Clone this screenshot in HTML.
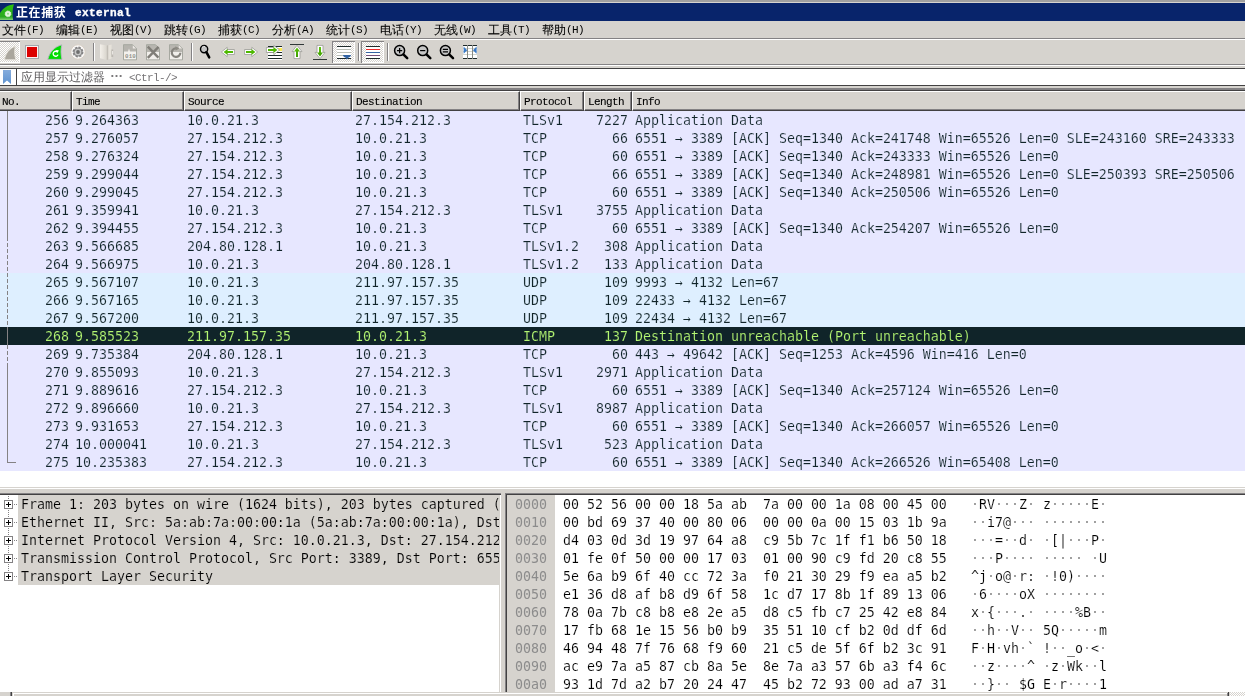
<!DOCTYPE html><html lang="zh"><head><meta charset="utf-8"><title>正在捕获 external</title><style>
html,body{margin:0;padding:0}
body{width:1245px;height:696px;overflow:hidden;background:#d6d3ce;position:relative;font-family:'Liberation Sans',sans-serif}
.a{position:absolute}
.m{font-family:'DejaVu Sans Mono','Liberation Mono',monospace;font-size:13.29px;white-space:pre;line-height:18px}
.ui{font-family:'Liberation Mono','WenQuanYi Zen Hei','Noto Sans CJK SC',monospace;font-size:12px;white-space:pre;line-height:12px;color:#000}
.ui .l{font-size:11px;letter-spacing:-0.6px}
.row span,.ui,.m,.g{will-change:transform}
.hl{background:#848284}.hd{background:#424142}.hw{background:#fff}
.row{position:absolute;left:0;width:1245px;height:18px;color:#102429}
.row span{position:absolute;top:1px;height:18px}
.t{background:#e7e7ff;-webkit-text-stroke:0.15px #e7e7ff}.u{background:#deefff;-webkit-text-stroke:0.15px #deefff}.i{background:#102429;color:#b5f773;-webkit-text-stroke:0.15px #102429}
.hc{position:absolute;top:91px;height:20px;box-sizing:border-box;background:#d6d3ce;border-top:1px solid #fff;border-left:1px solid #fff;border-bottom:1px solid #424142;border-right:1px solid #424142}
.hc:after{content:'';position:absolute;right:0;top:0;bottom:0;width:1px;background:#848284}
.hc:before{content:'';position:absolute;left:0;right:0;bottom:0;height:1px;background:#848284}
.hc b{position:absolute;left:2.5px;top:4px;font-weight:normal;-webkit-text-stroke:0.12px #000}
.chk{background-image:conic-gradient(#fff 25%,#d6d3ce 0 50%,#fff 0 75%,#d6d3ce 0);background-size:2px 2px}
.hx i{font-style:normal;color:#707070}</style></head><body>
<div class="a" style="left:0;top:0;width:1245px;height:2px;background:#a0a0a0"></div>
<div class="a" style="left:0;top:2px;width:1245px;height:1px;background:#d6d3ce"></div>
<div class="a" style="left:0;top:3px;width:1245px;height:18px;background:#08246b"></div>
<svg class="a" style="left:0;top:3px" width="16" height="18" viewBox="0 0 16 18"><defs><linearGradient id="fg" x1="0" y1="0" x2="0" y2="1"><stop offset="0" stop-color="#2cc40c"/><stop offset="0.8" stop-color="#2aa820"/><stop offset="1" stop-color="#86d27a"/></linearGradient></defs><path d="M-1 11.5 C2.5 5.5 7 2.2 13.9 1.2 C12.6 5.5 12.2 11 13.1 17 L-1 17 Z" fill="url(#fg)"/><circle cx="8" cy="10.8" r="2.9" fill="#e4f6de" stroke="#e4f6de" stroke-width="1" stroke-dasharray="1 1"/><circle cx="8" cy="10.8" r="1" fill="#8fd884"/></svg>
<div class="a ui" style="left:16px;top:8px;color:#fff;font-weight:bold;font-family:'Liberation Mono','Noto Sans CJK SC','WenQuanYi Zen Hei',monospace"><span style="letter-spacing:0.6px">正在捕获</span></div>
<div class="a ui" style="left:75px;top:7px;color:#fff;font-weight:bold"><span class="l" style="letter-spacing:0.4px;-webkit-text-stroke:0.35px #fff">external</span></div>
<div class="a ui" style="left:2px;top:25px;-webkit-text-stroke:0.1px #000">文件<span class="l" style="position:relative;top:-1px;-webkit-text-stroke:0">(F)</span></div>
<div class="a ui" style="left:56px;top:25px;-webkit-text-stroke:0.1px #000">编辑<span class="l" style="position:relative;top:-1px;-webkit-text-stroke:0">(E)</span></div>
<div class="a ui" style="left:110px;top:25px;-webkit-text-stroke:0.1px #000">视图<span class="l" style="position:relative;top:-1px;-webkit-text-stroke:0">(V)</span></div>
<div class="a ui" style="left:164px;top:25px;-webkit-text-stroke:0.1px #000">跳转<span class="l" style="position:relative;top:-1px;-webkit-text-stroke:0">(G)</span></div>
<div class="a ui" style="left:218px;top:25px;-webkit-text-stroke:0.1px #000">捕获<span class="l" style="position:relative;top:-1px;-webkit-text-stroke:0">(C)</span></div>
<div class="a ui" style="left:272px;top:25px;-webkit-text-stroke:0.1px #000">分析<span class="l" style="position:relative;top:-1px;-webkit-text-stroke:0">(A)</span></div>
<div class="a ui" style="left:326px;top:25px;-webkit-text-stroke:0.1px #000">统计<span class="l" style="position:relative;top:-1px;-webkit-text-stroke:0">(S)</span></div>
<div class="a ui" style="left:380px;top:25px;-webkit-text-stroke:0.1px #000">电话<span class="l" style="position:relative;top:-1px;-webkit-text-stroke:0">(Y)</span></div>
<div class="a ui" style="left:434px;top:25px;-webkit-text-stroke:0.1px #000">无线<span class="l" style="position:relative;top:-1px;-webkit-text-stroke:0">(W)</span></div>
<div class="a ui" style="left:488px;top:25px;-webkit-text-stroke:0.1px #000">工具<span class="l" style="position:relative;top:-1px;-webkit-text-stroke:0">(T)</span></div>
<div class="a ui" style="left:542px;top:25px;-webkit-text-stroke:0.1px #000">帮助<span class="l" style="position:relative;top:-1px;-webkit-text-stroke:0">(H)</span></div>
<div class="a hl" style="left:0;top:38px;width:1245px;height:1px"></div>
<div class="a hw" style="left:0;top:39px;width:1245px;height:1px"></div>
<div class="a hl" style="left:0;top:64px;width:1245px;height:1px"></div>
<div class="a hw" style="left:0;top:65px;width:1245px;height:1px"></div>
<svg class="a" style="left:0;top:40px" width="490" height="24" viewBox="0 0 490 24">
<defs>
<pattern id="ck" width="2" height="2" patternUnits="userSpaceOnUse"><rect width="2" height="2" fill="#d6d3ce"/><rect width="1" height="1" fill="#fff"/><rect x="1" y="1" width="1" height="1" fill="#fff"/></pattern>
<linearGradient id="gup" x1="0" y1="0" x2="0" y2="1"><stop offset="0" stop-color="#5ec40c"/><stop offset="1" stop-color="#3c9a00"/></linearGradient>
</defs>
<!-- 1 start capture (disabled, checked) -->
<g shape-rendering="crispEdges">
<rect x="0" y="2" width="19" height="20" fill="url(#ck)"/>
<rect x="0" y="1" width="20" height="1" fill="#848284"/>
<rect x="19" y="2" width="1" height="21" fill="#fff"/>
<rect x="0" y="22" width="20" height="1" fill="#fff"/>
</g>
<path d="M4.4 19.8 C5.6 13.2 9.4 8.4 15.3 6.3 C14.3 10.8 14.5 15.5 15.9 19.8 Z" fill="#aaa69d" stroke="#e9e5dd" stroke-width="0.9"/>
<!-- 2 stop -->
<rect x="25.5" y="5.5" width="13" height="13" fill="#fff0f0" stroke="#a4a8ac" stroke-width="1"/>
<rect x="27" y="7" width="10" height="10" fill="#dc0000"/>
<!-- 3 restart -->
<path d="M47.8 19.4 C49.5 12.5 54 7 61.8 4.8 C60.6 9.5 60.8 14.5 62 19.4 Z" fill="#00dc00" stroke="#b8b4c4" stroke-width="0.9"/>
<path d="M57.6 12.2 A2.5 2.5 0 1 0 58 14.6" fill="none" stroke="#fff" stroke-width="1.3"/>
<path d="M55.6 10 L58.8 10.2 L57.6 13 Z" fill="#fff"/>
<!-- 4 options -->
<circle cx="78" cy="12" r="7.2" fill="#fbfaf8" stroke="#d8cec4" stroke-width="0.9"/>
<circle cx="78" cy="12" r="4.6" fill="#c8c8c8" stroke="#848284" stroke-width="1.7" stroke-dasharray="2.2 1.4"/>
<circle cx="78" cy="12" r="4" fill="none" stroke="#8a8a8a" stroke-width="1"/>
<circle cx="78" cy="12" r="1.9" fill="#6e6e6e"/>
<!-- sep -->
<g shape-rendering="crispEdges"><rect x="93" y="3" width="1" height="18" fill="#848284"/><rect x="94" y="3" width="1" height="18" fill="#fff"/></g>
<!-- 5 open (disabled) -->
<defs><linearGradient id="fo" x1="0" y1="0" x2="1" y2="0"><stop offset="0" stop-color="#f3f0ea"/><stop offset="1" stop-color="#d9d5cd"/></linearGradient></defs>
<path d="M100 4.2 L106.8 5.6 L106.8 20 L100 18.2 Z" fill="url(#fo)"/>
<path d="M106.8 5.6 L108.4 5.2 L108.4 19.6 L106.8 20 Z" fill="#c2beb6"/>
<path d="M108.4 5.2 L111.6 4.4 L111.6 18.4 L108.4 19.6 Z" fill="#e6e2da"/>
<rect x="111.4" y="9.5" width="1.8" height="7.5" fill="#bcb8b2"/>
<rect x="112.2" y="11" width="0.9" height="3.5" fill="#f4f2ee"/>
<!-- 6 save (disabled) -->
<path d="M123.5 4.7 H132.5 L136.5 8.7 V19.8 H123.5 Z" fill="#b6b4ae" stroke="#a6a8a0" stroke-width="1"/>
<path d="M124 11.5 L128 11.5 L129 8.5 L130 11.5 L136 11.5 V19.3 H124 Z" fill="#f3f1ed"/>
<path d="M132.8 5.2 L136 8.4 L132.8 8.4 Z" fill="#eeeae6"/>
<text x="125" y="17.6" font-family="Liberation Mono,monospace" font-size="5.8" font-weight="bold" fill="#94948e" letter-spacing="0.2">010</text>
<!-- 7 close (disabled) -->
<path d="M146.5 4.7 H155.5 L159.5 8.7 V19.8 H146.5 Z" fill="#b8b6b0" stroke="#a6a8a0" stroke-width="1"/>
<path d="M147 12 H159 V19.3 H147 Z" fill="#f1efeb"/>
<path d="M147.8 6.6 L158.4 17.6 M158.6 6.8 L147.8 17.8" stroke="#807e78" stroke-width="2.4" fill="none"/>
<!-- 8 reload (disabled) -->
<path d="M169.5 4.7 H178.5 L182.5 8.7 V19.8 H169.5 Z" fill="#b8b6b0" stroke="#a6a8a0" stroke-width="1"/>
<path d="M170 12 H182 V19.3 H170 Z" fill="#f1efeb"/>
<path d="M178.8 5.2 L182 8.4 L178.8 8.4 Z" fill="#eeeae6"/>
<path d="M180.4 12.8 A4.3 4.3 0 1 1 177.2 8.4" fill="none" stroke="#86847e" stroke-width="2.2"/>
<path d="M175.4 6.2 L179.4 8.4 L175.6 10.6 Z" fill="#8e8c84"/>
<!-- sep -->
<g shape-rendering="crispEdges"><rect x="191" y="3" width="1" height="18" fill="#848284"/><rect x="192" y="3" width="1" height="18" fill="#fff"/></g>
<!-- find -->
<circle cx="204.1" cy="9.1" r="3.6" fill="#c4c4c4" stroke="#000" stroke-width="1.4"/>
<path d="M202 7.4 A2.6 2.6 0 0 1 205 6.6" fill="none" stroke="#eee" stroke-width="0.9"/>
<path d="M206.4 12.2 L209.2 17.4" stroke="#000" stroke-width="2.5" stroke-linecap="round"/>
<!-- back -->
<path d="M221.4 12 L227.2 7.3 V9.5 H234.4 V14.5 H227.2 V16.7 Z" fill="#fff" stroke="#9a9a96" stroke-width="0.8" stroke-linejoin="round"/>
<path d="M223.6 12 L227.6 8.9 V11 H233 V13 H227.6 V15.1 Z" fill="#4eb800"/>
<!-- forward -->
<path d="M257.6 12 L251.8 7.3 V9.5 H244.6 V14.5 H251.8 V16.7 Z" fill="#fff" stroke="#9a9a96" stroke-width="0.8" stroke-linejoin="round"/>
<path d="M255.4 12 L251.4 8.9 V11 H246 V13 H251.4 V15.1 Z" fill="#4eb800"/>
<!-- goto -->
<g shape-rendering="crispEdges">
<rect x="268" y="6" width="14" height="14" fill="#fff"/>
<rect x="268" y="6" width="14" height="1" fill="#1e2a2a"/>
<rect x="268" y="12" width="14" height="1" fill="#1e2a2a"/>
<rect x="268" y="15" width="14" height="1" fill="#1e2a2a"/>
<rect x="268" y="18" width="14" height="1" fill="#1e2a2a"/>
<rect x="278" y="8" width="4" height="3" fill="#fce94f"/>
</g>
<path d="M279.6 10 L273.8 5.3 V7.5 H266.4 V12.5 H273.8 V14.7 Z" fill="#fff" stroke="#9a9a96" stroke-width="0.8" stroke-linejoin="round"/>
<path d="M277.4 10 L273.4 6.9 V9 H268 V11 H273.4 V13.1 Z" fill="#4eb800"/>
<!-- top -->
<rect x="290" y="4" width="14" height="1" fill="#303838" shape-rendering="crispEdges"/>
<path d="M297 5.4 L302 11.6 H300 V18.6 H294 V11.6 H292 Z" fill="#fff" stroke="#9a9a96" stroke-width="0.8" stroke-linejoin="round"/>
<path d="M297 7.6 L300 11.6 H298 V17 H296 V11.6 H294 Z" fill="url(#gup)"/>
<!-- bottom -->
<rect x="313" y="19" width="14" height="1" fill="#303838" shape-rendering="crispEdges"/>
<path d="M320 18.6 L325 12.4 H323 V5.4 H317 V12.4 H315 Z" fill="#fff" stroke="#9a9a96" stroke-width="0.8" stroke-linejoin="round"/>
<path d="M320 16.4 L323 12.4 H321 V7 H319 V12.4 H317 Z" fill="url(#gup)"/>
<!-- autoscroll (checked) -->
<g shape-rendering="crispEdges">
<rect x="333" y="2" width="21" height="20" fill="url(#ck)"/>
<rect x="332" y="1" width="23" height="1" fill="#848284"/>
<rect x="332" y="1" width="1" height="22" fill="#848284"/>
<rect x="354" y="2" width="1" height="21" fill="#fff"/>
<rect x="333" y="22" width="22" height="1" fill="#fff"/>
<rect x="337" y="6" width="14" height="13" fill="#fff"/>
<rect x="337" y="6" width="14" height="1" fill="#1e2a2a"/>
<rect x="337" y="9" width="14" height="1" fill="#b8bcb4"/>
<rect x="337" y="12" width="14" height="1" fill="#b8bcb4"/>
<rect x="337" y="15" width="14" height="1" fill="#b8bcb4"/>
<rect x="337" y="18" width="14" height="1" fill="#1e2a2a"/>
</g>
<path d="M343 15 H351 C351 16.5 349.5 17.2 348.6 17.6 L347 19.6 L345.4 17.6 C344.5 17.2 343 16.5 343 15 Z" fill="#3465a4"/>
<!-- sep -->
<g shape-rendering="crispEdges"><rect x="358" y="3" width="1" height="18" fill="#848284"/><rect x="359" y="3" width="1" height="18" fill="#fff"/></g>
<!-- colorize (checked) -->
<g shape-rendering="crispEdges">
<rect x="362" y="2" width="21" height="20" fill="url(#ck)"/>
<rect x="361" y="1" width="23" height="1" fill="#848284"/>
<rect x="361" y="1" width="1" height="22" fill="#848284"/>
<rect x="383" y="2" width="1" height="21" fill="#fff"/>
<rect x="362" y="22" width="22" height="1" fill="#fff"/>
<rect x="366" y="6" width="14" height="13" fill="#fff"/>
<rect x="366" y="6" width="14" height="1" fill="#1e2a2a"/>
<rect x="366" y="9" width="14" height="1" fill="#ef2929"/>
<rect x="366" y="12" width="14" height="1" fill="#3465a4"/>
<rect x="366" y="15" width="14" height="1" fill="#75507b"/>
<rect x="366" y="18" width="14" height="1" fill="#1e2a2a"/>
</g>
<!-- sep -->
<g shape-rendering="crispEdges"><rect x="387" y="3" width="1" height="18" fill="#848284"/><rect x="388" y="3" width="1" height="18" fill="#fff"/></g>
<!-- zoom in -->
<g id="zm"><circle cx="399.6" cy="10.6" r="5" fill="#c6c6c6" stroke="#000" stroke-width="1.5"/><path d="M403.6 14.6 L407.2 18.2" stroke="#000" stroke-width="2.5" stroke-linecap="round"/></g>
<path d="M397 10.6 H402.2 M399.6 8 V13.2" stroke="#000" stroke-width="1.2"/>
<!-- zoom out -->
<g><circle cx="422.7" cy="10.6" r="5" fill="#c6c6c6" stroke="#000" stroke-width="1.5"/><path d="M426.7 14.6 L430.3 18.2" stroke="#000" stroke-width="2.5" stroke-linecap="round"/></g>
<path d="M420.1 10.6 H425.3" stroke="#000" stroke-width="1.2"/>
<!-- zoom reset -->
<g><circle cx="445.4" cy="10.6" r="5" fill="#c6c6c6" stroke="#000" stroke-width="1.5"/><path d="M449.4 14.6 L453 18.2" stroke="#000" stroke-width="2.5" stroke-linecap="round"/></g>
<path d="M442.8 9.4 H448 M442.8 11.8 H448" stroke="#000" stroke-width="1.2"/>
<!-- resize columns -->
<g shape-rendering="crispEdges">
<rect x="463" y="5" width="14" height="14" fill="#fff"/>
<rect x="463" y="8" width="14" height="1" fill="#d3d7cf"/>
<rect x="463" y="11" width="14" height="1" fill="#d3d7cf"/>
<rect x="463" y="14" width="14" height="1" fill="#d3d7cf"/>
<rect x="467" y="5" width="1" height="14" fill="#888a85"/>
<rect x="472" y="5" width="1" height="14" fill="#888a85"/>
<rect x="463" y="5" width="4" height="1" fill="#1e2a2a"/><rect x="468" y="5" width="4" height="1" fill="#1e2a2a"/><rect x="473" y="5" width="4" height="1" fill="#1e2a2a"/>
<rect x="463" y="18" width="4" height="1" fill="#1e2a2a"/><rect x="468" y="18" width="4" height="1" fill="#1e2a2a"/><rect x="473" y="18" width="4" height="1" fill="#1e2a2a"/>
</g>
<path d="M463.6 6.6 L467.2 10.2 L463.6 13.8 Z" fill="#3a7ac8"/>
<path d="M476.6 6.6 L473 10.2 L476.6 13.8 Z" fill="#3a7ac8"/>
</svg>

<div class="a" style="left:-2px;top:68px;width:1251px;height:18px;box-sizing:border-box;background:#fff;border:1px solid #424142"></div>
<div class="a hd" style="left:16px;top:68px;width:1px;height:18px"></div>
<svg class="a" style="left:3px;top:70px" width="8" height="14" viewBox="0 0 8 14"><defs><linearGradient id="bk" x1="0" y1="0" x2="0" y2="1"><stop offset="0" stop-color="#85acdc"/><stop offset="1" stop-color="#5f93d0"/></linearGradient></defs><path d="M0 0H8V14L4 10.5L0 14Z" fill="url(#bk)"/></svg>
<div class="a ui" style="left:21px;top:72px;color:#5e5c5e">应用显示过滤器</div>
<div class="a g" style="left:110px;top:65px;width:12px;text-align:center;color:#7a787a;font:bold 13px/16px 'Liberation Sans',sans-serif">…</div>
<div class="a ui" style="left:129px;top:72px;color:#767476"><span class="l">&lt;Ctrl-/&gt;</span></div>
<div class="a hl" style="left:0;top:88px;width:1245px;height:2px"></div>
<div class="a hd" style="left:0;top:90px;width:1245px;height:1px"></div>
<div class="hc" style="left:-2px;width:74px"><b class="ui"><span class="l">No.</span></b></div>
<div class="hc" style="left:72px;width:112px"><b class="ui"><span class="l">Time</span></b></div>
<div class="hc" style="left:184px;width:168px"><b class="ui"><span class="l">Source</span></b></div>
<div class="hc" style="left:352px;width:168px"><b class="ui"><span class="l">Destination</span></b></div>
<div class="hc" style="left:520px;width:64px"><b class="ui"><span class="l">Protocol</span></b></div>
<div class="hc" style="left:584px;width:48px"><b class="ui"><span class="l">Length</span></b></div>
<div class="hc" style="left:632px;width:620px"><b class="ui"><span class="l">Info</span></b></div>
<div class="row m t" style="top:111px"><span style="left:0;width:69px;text-align:right">256</span><span style="left:75px">9.264363</span><span style="left:187px">10.0.21.3</span><span style="left:355px">27.154.212.3</span><span style="left:523px">TLSv1</span><span style="left:584px;width:44px;text-align:right">7227</span><span style="left:635px">Application Data</span></div>
<div class="row m t" style="top:129px"><span style="left:0;width:69px;text-align:right">257</span><span style="left:75px">9.276057</span><span style="left:187px">27.154.212.3</span><span style="left:355px">10.0.21.3</span><span style="left:523px">TCP</span><span style="left:584px;width:44px;text-align:right">66</span><span style="left:635px">6551 → 3389 [ACK] Seq=1340 Ack=241748 Win=65526 Len=0 SLE=243160 SRE=243333</span></div>
<div class="row m t" style="top:147px"><span style="left:0;width:69px;text-align:right">258</span><span style="left:75px">9.276324</span><span style="left:187px">27.154.212.3</span><span style="left:355px">10.0.21.3</span><span style="left:523px">TCP</span><span style="left:584px;width:44px;text-align:right">60</span><span style="left:635px">6551 → 3389 [ACK] Seq=1340 Ack=243333 Win=65526 Len=0</span></div>
<div class="row m t" style="top:165px"><span style="left:0;width:69px;text-align:right">259</span><span style="left:75px">9.299044</span><span style="left:187px">27.154.212.3</span><span style="left:355px">10.0.21.3</span><span style="left:523px">TCP</span><span style="left:584px;width:44px;text-align:right">66</span><span style="left:635px">6551 → 3389 [ACK] Seq=1340 Ack=248981 Win=65526 Len=0 SLE=250393 SRE=250506</span></div>
<div class="row m t" style="top:183px"><span style="left:0;width:69px;text-align:right">260</span><span style="left:75px">9.299045</span><span style="left:187px">27.154.212.3</span><span style="left:355px">10.0.21.3</span><span style="left:523px">TCP</span><span style="left:584px;width:44px;text-align:right">60</span><span style="left:635px">6551 → 3389 [ACK] Seq=1340 Ack=250506 Win=65526 Len=0</span></div>
<div class="row m t" style="top:201px"><span style="left:0;width:69px;text-align:right">261</span><span style="left:75px">9.359941</span><span style="left:187px">10.0.21.3</span><span style="left:355px">27.154.212.3</span><span style="left:523px">TLSv1</span><span style="left:584px;width:44px;text-align:right">3755</span><span style="left:635px">Application Data</span></div>
<div class="row m t" style="top:219px"><span style="left:0;width:69px;text-align:right">262</span><span style="left:75px">9.394455</span><span style="left:187px">27.154.212.3</span><span style="left:355px">10.0.21.3</span><span style="left:523px">TCP</span><span style="left:584px;width:44px;text-align:right">60</span><span style="left:635px">6551 → 3389 [ACK] Seq=1340 Ack=254207 Win=65526 Len=0</span></div>
<div class="row m t" style="top:237px"><span style="left:0;width:69px;text-align:right">263</span><span style="left:75px">9.566685</span><span style="left:187px">204.80.128.1</span><span style="left:355px">10.0.21.3</span><span style="left:523px">TLSv1.2</span><span style="left:584px;width:44px;text-align:right">308</span><span style="left:635px">Application Data</span></div>
<div class="row m t" style="top:255px"><span style="left:0;width:69px;text-align:right">264</span><span style="left:75px">9.566975</span><span style="left:187px">10.0.21.3</span><span style="left:355px">204.80.128.1</span><span style="left:523px">TLSv1.2</span><span style="left:584px;width:44px;text-align:right">133</span><span style="left:635px">Application Data</span></div>
<div class="row m u" style="top:273px"><span style="left:0;width:69px;text-align:right">265</span><span style="left:75px">9.567107</span><span style="left:187px">10.0.21.3</span><span style="left:355px">211.97.157.35</span><span style="left:523px">UDP</span><span style="left:584px;width:44px;text-align:right">109</span><span style="left:635px">9993 → 4132 Len=67</span></div>
<div class="row m u" style="top:291px"><span style="left:0;width:69px;text-align:right">266</span><span style="left:75px">9.567165</span><span style="left:187px">10.0.21.3</span><span style="left:355px">211.97.157.35</span><span style="left:523px">UDP</span><span style="left:584px;width:44px;text-align:right">109</span><span style="left:635px">22433 → 4132 Len=67</span></div>
<div class="row m u" style="top:309px"><span style="left:0;width:69px;text-align:right">267</span><span style="left:75px">9.567200</span><span style="left:187px">10.0.21.3</span><span style="left:355px">211.97.157.35</span><span style="left:523px">UDP</span><span style="left:584px;width:44px;text-align:right">109</span><span style="left:635px">22434 → 4132 Len=67</span></div>
<div class="row m i" style="top:327px"><span style="left:0;width:69px;text-align:right">268</span><span style="left:75px">9.585523</span><span style="left:187px">211.97.157.35</span><span style="left:355px">10.0.21.3</span><span style="left:523px">ICMP</span><span style="left:584px;width:44px;text-align:right">137</span><span style="left:635px">Destination unreachable (Port unreachable)</span></div>
<div class="row m t" style="top:345px"><span style="left:0;width:69px;text-align:right">269</span><span style="left:75px">9.735384</span><span style="left:187px">204.80.128.1</span><span style="left:355px">10.0.21.3</span><span style="left:523px">TCP</span><span style="left:584px;width:44px;text-align:right">60</span><span style="left:635px">443 → 49642 [ACK] Seq=1253 Ack=4596 Win=416 Len=0</span></div>
<div class="row m t" style="top:363px"><span style="left:0;width:69px;text-align:right">270</span><span style="left:75px">9.855093</span><span style="left:187px">10.0.21.3</span><span style="left:355px">27.154.212.3</span><span style="left:523px">TLSv1</span><span style="left:584px;width:44px;text-align:right">2971</span><span style="left:635px">Application Data</span></div>
<div class="row m t" style="top:381px"><span style="left:0;width:69px;text-align:right">271</span><span style="left:75px">9.889616</span><span style="left:187px">27.154.212.3</span><span style="left:355px">10.0.21.3</span><span style="left:523px">TCP</span><span style="left:584px;width:44px;text-align:right">60</span><span style="left:635px">6551 → 3389 [ACK] Seq=1340 Ack=257124 Win=65526 Len=0</span></div>
<div class="row m t" style="top:399px"><span style="left:0;width:69px;text-align:right">272</span><span style="left:75px">9.896660</span><span style="left:187px">10.0.21.3</span><span style="left:355px">27.154.212.3</span><span style="left:523px">TLSv1</span><span style="left:584px;width:44px;text-align:right">8987</span><span style="left:635px">Application Data</span></div>
<div class="row m t" style="top:417px"><span style="left:0;width:69px;text-align:right">273</span><span style="left:75px">9.931653</span><span style="left:187px">27.154.212.3</span><span style="left:355px">10.0.21.3</span><span style="left:523px">TCP</span><span style="left:584px;width:44px;text-align:right">60</span><span style="left:635px">6551 → 3389 [ACK] Seq=1340 Ack=266057 Win=65526 Len=0</span></div>
<div class="row m t" style="top:435px"><span style="left:0;width:69px;text-align:right">274</span><span style="left:75px">10.000041</span><span style="left:187px">10.0.21.3</span><span style="left:355px">27.154.212.3</span><span style="left:523px">TLSv1</span><span style="left:584px;width:44px;text-align:right">523</span><span style="left:635px">Application Data</span></div>
<div class="row m t" style="top:453px"><span style="left:0;width:69px;text-align:right">275</span><span style="left:75px">10.235383</span><span style="left:187px">27.154.212.3</span><span style="left:355px">10.0.21.3</span><span style="left:523px">TCP</span><span style="left:584px;width:44px;text-align:right">60</span><span style="left:635px">6551 → 3389 [ACK] Seq=1340 Ack=266526 Win=65408 Len=0</span></div>
<div class="a hl" style="left:7px;top:111px;width:1px;height:126px"></div>
<div class="a" style="left:7px;top:237px;width:1px;height:90px;background-image:linear-gradient(#848284 66.67%,transparent 0);background-size:1px 6px"></div>
<div class="a hl" style="left:7px;top:327px;width:1px;height:18px"></div>
<div class="a" style="left:7px;top:345px;width:1px;height:18px;background-image:linear-gradient(#848284 66.67%,transparent 0);background-size:1px 6px"></div>
<div class="a hl" style="left:7px;top:363px;width:1px;height:100px"></div>
<div class="a hl" style="left:7px;top:462px;width:9px;height:1px"></div>
<div class="a hw" style="left:0;top:471px;width:1245px;height:16px"></div>
<div class="a" style="left:0;top:487px;width:1245px;height:1px;background:#d6d3ce"></div>
<div class="a hw" style="left:0;top:488px;width:1245px;height:1px"></div>
<div class="a hl" style="left:0;top:493px;width:1245px;height:1px"></div>
<div class="a hd" style="left:0;top:494px;width:1245px;height:1px"></div>
<div class="a hw" style="left:0;top:495px;width:499px;height:197px;overflow:hidden">
<div class="a" style="left:18px;top:0;width:481px;height:90px;background:#d6d3ce"></div>
<div class="a" style="left:8px;top:1px;width:1px;height:81px;background-image:linear-gradient(#848284 50%,transparent 0);background-size:1px 2px;z-index:0"></div>
<div class="a m" style="left:21px;top:1px;color:#000;-webkit-text-stroke:0.15px #d6d3ce">Frame 1: 203 bytes on wire (1624 bits), 203 bytes captured (1624 bits) on interface 0</div>
<div class="a" style="left:4px;top:5px;width:9px;height:9px;box-sizing:border-box;border:1px solid #848284;background:#fff"></div>
<div class="a" style="left:6px;top:9px;width:5px;height:1px;background:#000"></div>
<div class="a" style="left:8px;top:7px;width:1px;height:5px;background:#000"></div>
<div class="a" style="left:14px;top:9px;width:1px;height:1px;background:#848284"></div>
<div class="a" style="left:16px;top:9px;width:1px;height:1px;background:#848284"></div>
<div class="a m" style="left:21px;top:19px;color:#000;-webkit-text-stroke:0.15px #d6d3ce">Ethernet II, Src: 5a:ab:7a:00:00:1a (5a:ab:7a:00:00:1a), Dst: 00:52:56:00:00:18 (00:52:56:00:00:18)</div>
<div class="a" style="left:4px;top:23px;width:9px;height:9px;box-sizing:border-box;border:1px solid #848284;background:#fff"></div>
<div class="a" style="left:6px;top:27px;width:5px;height:1px;background:#000"></div>
<div class="a" style="left:8px;top:25px;width:1px;height:5px;background:#000"></div>
<div class="a" style="left:14px;top:27px;width:1px;height:1px;background:#848284"></div>
<div class="a" style="left:16px;top:27px;width:1px;height:1px;background:#848284"></div>
<div class="a m" style="left:21px;top:37px;color:#000;-webkit-text-stroke:0.15px #d6d3ce">Internet Protocol Version 4, Src: 10.0.21.3, Dst: 27.154.212.3</div>
<div class="a" style="left:4px;top:41px;width:9px;height:9px;box-sizing:border-box;border:1px solid #848284;background:#fff"></div>
<div class="a" style="left:6px;top:45px;width:5px;height:1px;background:#000"></div>
<div class="a" style="left:8px;top:43px;width:1px;height:5px;background:#000"></div>
<div class="a" style="left:14px;top:45px;width:1px;height:1px;background:#848284"></div>
<div class="a" style="left:16px;top:45px;width:1px;height:1px;background:#848284"></div>
<div class="a m" style="left:21px;top:55px;color:#000;-webkit-text-stroke:0.15px #d6d3ce">Transmission Control Protocol, Src Port: 3389, Dst Port: 6551, Seq: 1, Ack: 1, Len: 149</div>
<div class="a" style="left:4px;top:59px;width:9px;height:9px;box-sizing:border-box;border:1px solid #848284;background:#fff"></div>
<div class="a" style="left:6px;top:63px;width:5px;height:1px;background:#000"></div>
<div class="a" style="left:8px;top:61px;width:1px;height:5px;background:#000"></div>
<div class="a" style="left:14px;top:63px;width:1px;height:1px;background:#848284"></div>
<div class="a" style="left:16px;top:63px;width:1px;height:1px;background:#848284"></div>
<div class="a m" style="left:21px;top:73px;color:#000;-webkit-text-stroke:0.15px #d6d3ce">Transport Layer Security</div>
<div class="a" style="left:4px;top:77px;width:9px;height:9px;box-sizing:border-box;border:1px solid #848284;background:#fff"></div>
<div class="a" style="left:6px;top:81px;width:5px;height:1px;background:#000"></div>
<div class="a" style="left:8px;top:79px;width:1px;height:5px;background:#000"></div>
<div class="a" style="left:14px;top:81px;width:1px;height:1px;background:#848284"></div>
<div class="a" style="left:16px;top:81px;width:1px;height:1px;background:#848284"></div>
</div>
<div class="a" style="left:499px;top:495px;width:1px;height:197px;background:#d6d3ce"></div>
<div class="a hw" style="left:500px;top:495px;width:1px;height:197px"></div>
<div class="a hl" style="left:505px;top:493px;width:1px;height:199px"></div>
<div class="a hd" style="left:506px;top:494px;width:1px;height:198px"></div>
<div class="a" style="left:501px;top:489px;width:4px;height:203px;background:#d6d3ce"></div>
<div class="a hw" style="left:507px;top:495px;width:738px;height:197px;overflow:hidden">
<div class="a" style="left:0;top:0;width:48px;height:197px;background:#d6d3ce"></div>
<div class="a m" style="left:8px;top:1px;color:#8c8c8c">0000</div>
<div class="a m" style="left:56px;top:1px;color:#000;-webkit-text-stroke:0.15px #fff">00 52 56 00 00 18 5a ab  7a 00 00 1a 08 00 45 00</div>
<div class="a m hx" style="left:464px;top:1px;color:#000;-webkit-text-stroke:0.15px #fff"><i>·</i>RV<i>·</i><i>·</i><i>·</i>Z<i>·</i> z<i>·</i><i>·</i><i>·</i><i>·</i><i>·</i>E<i>·</i></div>
<div class="a m" style="left:8px;top:19px;color:#8c8c8c">0010</div>
<div class="a m" style="left:56px;top:19px;color:#000;-webkit-text-stroke:0.15px #fff">00 bd 69 37 40 00 80 06  00 00 0a 00 15 03 1b 9a</div>
<div class="a m hx" style="left:464px;top:19px;color:#000;-webkit-text-stroke:0.15px #fff"><i>·</i><i>·</i>i7@<i>·</i><i>·</i><i>·</i> <i>·</i><i>·</i><i>·</i><i>·</i><i>·</i><i>·</i><i>·</i><i>·</i></div>
<div class="a m" style="left:8px;top:37px;color:#8c8c8c">0020</div>
<div class="a m" style="left:56px;top:37px;color:#000;-webkit-text-stroke:0.15px #fff">d4 03 0d 3d 19 97 64 a8  c9 5b 7c 1f f1 b6 50 18</div>
<div class="a m hx" style="left:464px;top:37px;color:#000;-webkit-text-stroke:0.15px #fff"><i>·</i><i>·</i><i>·</i>=<i>·</i><i>·</i>d<i>·</i> <i>·</i>[|<i>·</i><i>·</i><i>·</i>P<i>·</i></div>
<div class="a m" style="left:8px;top:55px;color:#8c8c8c">0030</div>
<div class="a m" style="left:56px;top:55px;color:#000;-webkit-text-stroke:0.15px #fff">01 fe 0f 50 00 00 17 03  01 00 90 c9 fd 20 c8 55</div>
<div class="a m hx" style="left:464px;top:55px;color:#000;-webkit-text-stroke:0.15px #fff"><i>·</i><i>·</i><i>·</i>P<i>·</i><i>·</i><i>·</i><i>·</i> <i>·</i><i>·</i><i>·</i><i>·</i><i>·</i> <i>·</i>U</div>
<div class="a m" style="left:8px;top:73px;color:#8c8c8c">0040</div>
<div class="a m" style="left:56px;top:73px;color:#000;-webkit-text-stroke:0.15px #fff">5e 6a b9 6f 40 cc 72 3a  f0 21 30 29 f9 ea a5 b2</div>
<div class="a m hx" style="left:464px;top:73px;color:#000;-webkit-text-stroke:0.15px #fff">^j<i>·</i>o@<i>·</i>r: <i>·</i>!0)<i>·</i><i>·</i><i>·</i><i>·</i></div>
<div class="a m" style="left:8px;top:91px;color:#8c8c8c">0050</div>
<div class="a m" style="left:56px;top:91px;color:#000;-webkit-text-stroke:0.15px #fff">e1 36 d8 af b8 d9 6f 58  1c d7 17 8b 1f 89 13 06</div>
<div class="a m hx" style="left:464px;top:91px;color:#000;-webkit-text-stroke:0.15px #fff"><i>·</i>6<i>·</i><i>·</i><i>·</i><i>·</i>oX <i>·</i><i>·</i><i>·</i><i>·</i><i>·</i><i>·</i><i>·</i><i>·</i></div>
<div class="a m" style="left:8px;top:109px;color:#8c8c8c">0060</div>
<div class="a m" style="left:56px;top:109px;color:#000;-webkit-text-stroke:0.15px #fff">78 0a 7b c8 b8 e8 2e a5  d8 c5 fb c7 25 42 e8 84</div>
<div class="a m hx" style="left:464px;top:109px;color:#000;-webkit-text-stroke:0.15px #fff">x<i>·</i>{<i>·</i><i>·</i><i>·</i>.<i>·</i> <i>·</i><i>·</i><i>·</i><i>·</i>%B<i>·</i><i>·</i></div>
<div class="a m" style="left:8px;top:127px;color:#8c8c8c">0070</div>
<div class="a m" style="left:56px;top:127px;color:#000;-webkit-text-stroke:0.15px #fff">17 fb 68 1e 15 56 b0 b9  35 51 10 cf b2 0d df 6d</div>
<div class="a m hx" style="left:464px;top:127px;color:#000;-webkit-text-stroke:0.15px #fff"><i>·</i><i>·</i>h<i>·</i><i>·</i>V<i>·</i><i>·</i> 5Q<i>·</i><i>·</i><i>·</i><i>·</i><i>·</i>m</div>
<div class="a m" style="left:8px;top:145px;color:#8c8c8c">0080</div>
<div class="a m" style="left:56px;top:145px;color:#000;-webkit-text-stroke:0.15px #fff">46 94 48 7f 76 68 f9 60  21 c5 de 5f 6f b2 3c 91</div>
<div class="a m hx" style="left:464px;top:145px;color:#000;-webkit-text-stroke:0.15px #fff">F<i>·</i>H<i>·</i>vh<i>·</i>` !<i>·</i><i>·</i>_o<i>·</i>&lt;<i>·</i></div>
<div class="a m" style="left:8px;top:163px;color:#8c8c8c">0090</div>
<div class="a m" style="left:56px;top:163px;color:#000;-webkit-text-stroke:0.15px #fff">ac e9 7a a5 87 cb 8a 5e  8e 7a a3 57 6b a3 f4 6c</div>
<div class="a m hx" style="left:464px;top:163px;color:#000;-webkit-text-stroke:0.15px #fff"><i>·</i><i>·</i>z<i>·</i><i>·</i><i>·</i><i>·</i>^ <i>·</i>z<i>·</i>Wk<i>·</i><i>·</i>l</div>
<div class="a m" style="left:8px;top:181px;color:#8c8c8c">00a0</div>
<div class="a m" style="left:56px;top:181px;color:#000;-webkit-text-stroke:0.15px #fff">93 1d 7d a2 b7 20 24 47  45 b2 72 93 00 ad a7 31</div>
<div class="a m hx" style="left:464px;top:181px;color:#000;-webkit-text-stroke:0.15px #fff"><i>·</i><i>·</i>}<i>·</i><i>·</i> $G E<i>·</i>r<i>·</i><i>·</i><i>·</i><i>·</i>1</div>
</div>
<div class="a" style="left:0;top:692px;width:1245px;height:4px;background:#d6d3ce"></div>
<div class="a hw" style="left:13px;top:693px;width:1214px;height:1px"></div>
<div class="a hw" style="left:13px;top:693px;width:1px;height:3px"></div>
<div class="a hl" style="left:10px;top:692px;width:1px;height:4px"></div>
<div class="a hd" style="left:11px;top:692px;width:1px;height:4px"></div>
<div class="a hl" style="left:1227px;top:693px;width:1px;height:3px"></div>
<div class="a hd" style="left:1228px;top:692px;width:1px;height:4px"></div>
<div class="a chk" style="left:1230px;top:692px;width:15px;height:4px"></div>
</body></html>
